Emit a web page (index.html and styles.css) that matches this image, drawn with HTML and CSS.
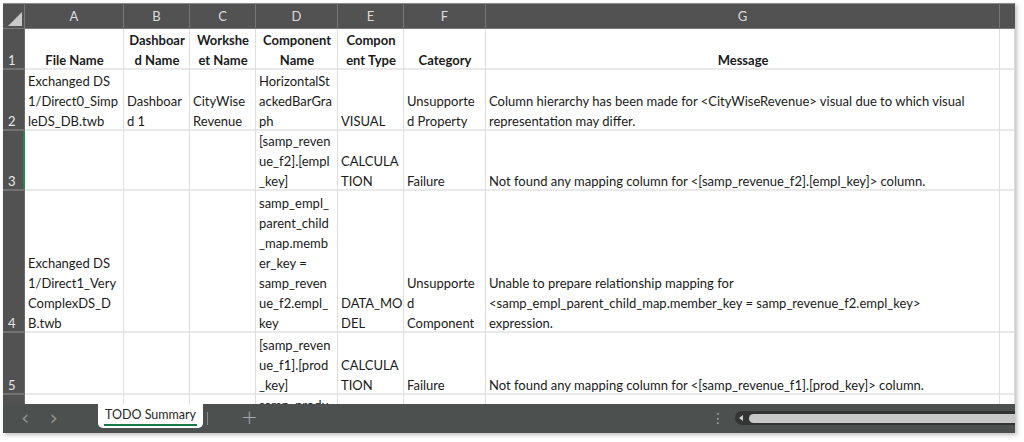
FILE: index.html
```html
<!DOCTYPE html>
<html>
<head>
<meta charset="utf-8">
<link rel="stylesheet" href="styles.css">
</head>
<body>
<div class="frame">
  <div class="sheet">
    <div class="corner"><span class="tri"></span></div>
    <div class="colh">A</div>
    <div class="colh">B</div>
    <div class="colh">C</div>
    <div class="colh">D</div>
    <div class="colh">E</div>
    <div class="colh">F</div>
    <div class="colh">G</div>
    <div class="colh last"></div>

    <div class="rowh">1</div>
    <div class="c hd">File Name</div>
    <div class="c hd">Dashboar<br>d Name</div>
    <div class="c hd">Workshe<br>et Name</div>
    <div class="c hd">Component<br>Name</div>
    <div class="c hd">Compon<br>ent Type</div>
    <div class="c hd">Category</div>
    <div class="c hd">Message</div>
    <div class="c"></div>

    <div class="rowh">2</div>
    <div class="c">Exchanged DS<br>1/Direct0_Simp<br>leDS_DB.twb</div>
    <div class="c">Dashboar<br>d 1</div>
    <div class="c">CityWise<br>Revenue</div>
    <div class="c">HorizontalSt<br>ackedBarGra<br>ph</div>
    <div class="c">VISUAL</div>
    <div class="c">Unsupporte<br>d Property</div>
    <div class="c">Column hierarchy has been made for &lt;CityWiseRevenue&gt; visual due to which visual<br>representation may differ.</div>
    <div class="c"></div>

    <div class="rowh active">3</div>
    <div class="c"></div>
    <div class="c"></div>
    <div class="c"></div>
    <div class="c">[samp_reven<br>ue_f2].[empl<br>_key]</div>
    <div class="c">CALCULA<br>TION</div>
    <div class="c">Failure</div>
    <div class="c">Not found any mapping column for &lt;[samp_revenue_f2].[empl_key]&gt; column.</div>
    <div class="c"></div>

    <div class="rowh">4</div>
    <div class="c">Exchanged DS<br>1/Direct1_Very<br>ComplexDS_D<br>B.twb</div>
    <div class="c"></div>
    <div class="c"></div>
    <div class="c">samp_empl_<br>parent_child<br>_map.memb<br>er_key =<br>samp_reven<br>ue_f2.empl_<br>key</div>
    <div class="c">DATA_MO<br>DEL</div>
    <div class="c">Unsupporte<br>d<br>Component</div>
    <div class="c">Unable to prepare relationship mapping for<br>&lt;samp_empl_parent_child_map.member_key = samp_revenue_f2.empl_key&gt;<br>expression.</div>
    <div class="c"></div>

    <div class="rowh">5</div>
    <div class="c"></div>
    <div class="c"></div>
    <div class="c"></div>
    <div class="c">[samp_reven<br>ue_f1].[prod<br>_key]</div>
    <div class="c">CALCULA<br>TION</div>
    <div class="c">Failure</div>
    <div class="c">Not found any mapping column for &lt;[samp_revenue_f1].[prod_key]&gt; column.</div>
    <div class="c"></div>

    <div class="rowh"></div>
    <div class="c"></div>
    <div class="c"></div>
    <div class="c"></div>
    <div class="c">samp_produ<br>ct_map.prod<br>_key</div>
    <div class="c"></div>
    <div class="c"></div>
    <div class="c"></div>
    <div class="c"></div>
  </div>
  <div class="tabbar">
    <div class="nav">
      <span class="arrow">&#x2039;</span>
      <span class="arrow">&#x203A;</span>
    </div>
    <div class="tab"><span class="tablabel">TODO Summary</span></div>
    <span class="sep"></span>
    <span class="plus">+</span>
    <span class="spacer"></span>
    <span class="dots">&#x22EE;</span>
    <div class="track">
      <span class="tri-left"></span>
      <span class="thumb"></span>
    </div>
  </div>
</div>
</body>
</html>
```

FILE: styles.css
```css
html, body {
  margin: 0;
  padding: 0;
  background: #ffffff;
}
body {
  font-family: "Lato", "Liberation Sans", sans-serif;
  width: 1024px;
  height: 442px;
  overflow: hidden;
}
.frame {
  margin: 3px 0 0 3px;
  width: 1012px;
  box-shadow: 2px 2px 4px rgba(0,0,0,0.25);
}
.sheet {
  display: grid;
  grid-template-columns: 22px 99px 66px 66px 82px 66px 82px 514px 15px;
  grid-template-rows: 26px 41px 61px 60px 142px 62px 60px;
  height: 401px;
  overflow: hidden;
  background: #ffffff;
}
.corner {
  background: #525252;
  border-top: 1px solid #8e8e8e;
  border-right: 1px solid #777;
  border-bottom: 1px solid #777;
  box-sizing: border-box;
  position: relative;
}
.tri {
  position: absolute;
  right: 2px;
  bottom: 2px;
  width: 0;
  height: 0;
  border-left: 14px solid transparent;
  border-bottom: 14px solid #c9c9c9;
}
.colh {
  background: #525252;
  color: #dcdcdc;
  font-size: 13px;
  display: flex;
  align-items: center;
  justify-content: center;
  border-top: 1px solid #8e8e8e;
  border-right: 1px solid #767676;
  border-bottom: 1px solid #7a7a7a;
  box-sizing: border-box;
}
.colh.last { border-right: none; }
.rowh {
  background: #525252;
  color: #e6e6e6;
  font-size: 13px;
  line-height: 20px;
  display: flex;
  align-items: flex-end;
  padding-left: 5px;
  box-sizing: border-box;
  box-shadow: inset 0 -2px #727272, inset -1px 0 #6a6a6a;
}
.rowh.active {
  box-shadow: inset 0 -2px #727272, inset -2px 0 #1e8a4a;
}
.c {
  font-size: 13px;
  line-height: 20px;
  color: #1a1a1a;
  white-space: nowrap;
  overflow: hidden;
  display: flex;
  flex-direction: column;
  justify-content: flex-end;
  padding: 0 3px;
  box-sizing: border-box;
  box-shadow: inset -1px 0 #dedede, inset 0 -2px #e9e9e9;
}
.c.hd {
  font-weight: bold;
  text-align: center;
  align-items: center;
}
.tabbar {
  height: 29px;
  background: #4c504f;
  display: flex;
  align-items: flex-start;
  box-sizing: border-box;
}
.nav {
  display: flex;
  gap: 20px;
  padding-left: 18px;
  width: 80px;
  height: 29px;
  align-items: center;
  box-sizing: border-box;
}
.arrow {
  color: #8c8f8f;
  font-size: 21px;
  line-height: 1;
  font-family: "DejaVu Sans", sans-serif;
}
.tab {
  margin-left: 15px;
  width: 105px;
  height: 24px;
  background: #ffffff;
  border-radius: 0 0 5px 5px;
  display: flex;
  justify-content: center;
  align-items: flex-start;
}
.tablabel {
  font-size: 12.5px;
  color: #262626;
  line-height: 17px;
  margin-top: 2px;
  padding: 0 1px 1px;
  border-bottom: 2px solid #1b7a43;
}
.sep {
  width: 1px;
  height: 13px;
  background: #8a8a8a;
  margin: 8px 0 0 4px;
}
.plus {
  margin-left: 33px;
  color: #a5a8a8;
  font-size: 20px;
  line-height: 26px;
  font-family: "DejaVu Sans", sans-serif;
  font-weight: 300;
}
.spacer { flex: 1; }
.dots {
  color: #a5a8a8;
  font-size: 14px;
  line-height: 29px;
  margin-right: 10px;
  font-family: "DejaVu Sans", sans-serif;
}
.track {
  width: 280px;
  height: 14px;
  margin-top: 7px;
  background: #333535;
  border-radius: 7px 0 0 7px;
  display: flex;
  align-items: center;
  padding-left: 4px;
  box-sizing: border-box;
}
.tri-left {
  width: 0;
  height: 0;
  border-top: 3px solid transparent;
  border-bottom: 3px solid transparent;
  border-right: 4px solid #cfcfcf;
}
.thumb {
  flex: 1;
  height: 9px;
  margin-left: 6px;
  background: #c8c8c8;
  border-radius: 5px 0 0 5px;
}
```
